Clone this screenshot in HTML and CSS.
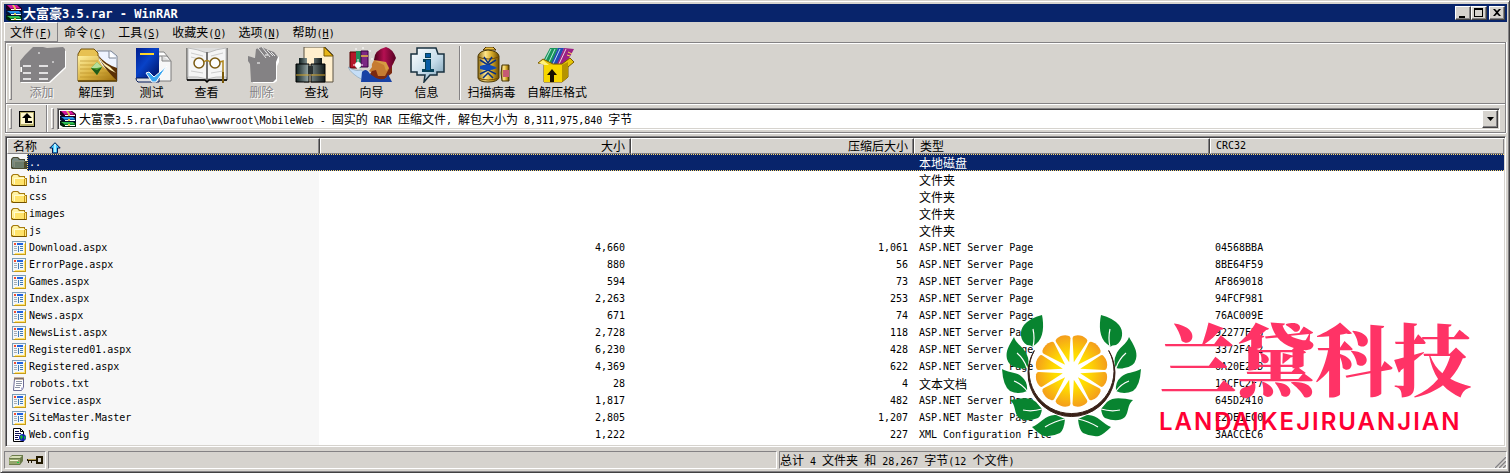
FILE: index.html
```html
<!DOCTYPE html>
<html lang="zh-CN">
<head>
<meta charset="utf-8">
<title>大富豪3.5.rar - WinRAR</title>
<link rel="stylesheet" href="styles.css">
</head>
<body>
<svg class="defs" width="0" height="0" aria-hidden="true">
  <defs>
    <linearGradient id="gold" x1="0" y1="0" x2="1" y2="0"><stop offset="0" stop-color="#8c6a10"/><stop offset=".35" stop-color="#ffe68c"/><stop offset=".65" stop-color="#d6aa29"/><stop offset="1" stop-color="#6b4a00"/></linearGradient>
    <linearGradient id="goldv" x1="0" y1="0" x2="1" y2="1"><stop offset="0" stop-color="#fff0a0"/><stop offset=".5" stop-color="#dcb544"/><stop offset="1" stop-color="#9a6a08"/></linearGradient>
    <linearGradient id="steel" x1="0" y1="0" x2="1" y2="0"><stop offset="0" stop-color="#102020"/><stop offset=".4" stop-color="#8c9c9c"/><stop offset="1" stop-color="#101818"/></linearGradient>
    <linearGradient id="blue" x1="0" y1="0" x2="1" y2="1"><stop offset="0" stop-color="#001c8c"/><stop offset=".45" stop-color="#0842c8"/><stop offset="1" stop-color="#001060"/></linearGradient>
    <linearGradient id="bubble" x1="0" y1="0" x2="1" y2="1"><stop offset="0" stop-color="#fff"/><stop offset=".55" stop-color="#c6dcea"/><stop offset="1" stop-color="#7096ac"/></linearGradient>
    <linearGradient id="fez" x1="0" y1="0" x2="1" y2="0"><stop offset="0" stop-color="#4a0018"/><stop offset=".45" stop-color="#b51052"/><stop offset="1" stop-color="#520021"/></linearGradient>
    <radialGradient id="juice" gradientUnits="userSpaceOnUse" cx="0" cy="0" r="38"><stop offset="0" stop-color="#fff000"/><stop offset=".45" stop-color="#ffdc00"/><stop offset="1" stop-color="#f3981f"/></radialGradient>

    <symbol id="books" viewBox="0 0 16 16">
      <path d="M0 0h12l4 3v3H3L0 4z" fill="#210018"/><path d="M1 0h10l3 3H4z" fill="#d6189c"/><path d="M4 3h11v1H4z" fill="#8c0863"/><path d="M5 4h10v1H5z" fill="#fff"/>
      <path d="M0 5h3l1 1h12v5H3L0 9z" fill="#001031"/><path d="M1 6h12l2 2H4z" fill="#2994e7"/><path d="M4 8h11v1H4z" fill="#0852a5"/><path d="M5 9h10v1H5z" fill="#fff"/>
      <path d="M0 10h3l1 1h12v5H3l-3-2z" fill="#00210a"/><path d="M1 11h12l2 2H4z" fill="#31bd52"/><path d="M4 13h11v1H4z" fill="#087b29"/><path d="M5 14h10v1H5z" fill="#fff"/>
      <path d="M6 0h2l2 3H8zM8 3h2v2H8zM8 8h2v2H8zM8 13h2v2H8z" fill="#dec652"/>
    </symbol>
    <symbol id="folder" viewBox="0 0 16 14">
      <path d="M0 12V3l2-2h5l2 2h5v2h2v8H1z" fill="#a57b10"/><path d="M1 11V4l1.500-2h4L8 4h5v1H3v6z" fill="#fff3a5"/><path d="M3 5h11v7H2z" fill="#ffe36b"/><path d="M3 5h10v1H4v5H3z" fill="#fffbd0"/><path d="M13 6h1v6h-1z" fill="#c69410"/><path d="M14 6h1v6h-1z" fill="#ffe77b"/><path d="M2 12h13v1H2z" fill="#735200"/>
    </symbol>
    <symbol id="folder-up" viewBox="0 0 16 14">
      <path d="M0 12V3l2-2h5l2 2h5v2h2v8H1z" fill="#4a4a31"/><path d="M1 11V4l1.500-2h4L8 4h5v1H3v6z" fill="#7b8c84"/><path d="M3 5h11v7H2z" fill="#6b7b6b"/><path d="M3 5h10v1H4v5H3z" fill="#848c7b"/><path d="M13 6h1v6h-1z" fill="#524a29"/>
    </symbol>
    <symbol id="page" viewBox="0 0 14 14">
      <path d="M0 0h14v14H0z" fill="#7b9cb5"/><path d="M14 2v12H2v-1h11V2z" fill="#c69c18"/><path d="M1 1h12v12H1z" fill="#f2f7fb"/><path d="M12 3h1v10H3v-1h9z" fill="#ffe273"/><path d="M2 2h2v2H2z" fill="#f04a31"/><path d="M5 2h6v2H5z" fill="#2163de"/><path d="M2 5h3v1H2zM2 7h3v1H2zM2 9h3v1H2z" fill="#a5adb5"/><path d="M6 5h1v6H6zM8 5h3v1H8zM8 7h3v1H8zM8 9h3v1H8z" fill="#427bb5"/>
    </symbol>
    <symbol id="note" viewBox="0 0 14 14">
      <path d="M2.500 1.500h9v9l-2 3h-8z" fill="#fff" stroke="#6b6b94"/><path d="M3 0v3M5 0v3M7 0v3M9 0v3M11 0v3" stroke="#947342"/><path d="M4 4.500h6M4 6.500h6M4 8.500h5M3 10.500h5" stroke="#8c94a5"/><path d="M9 13v-2.500h2.500z" fill="#adadd6"/>
    </symbol>
    <symbol id="config" viewBox="0 0 14 14">
      <path d="M1.500.500h7l3 3v10h-10z" fill="#fff" stroke="#000"/><path d="M8.500.500v3h3" fill="none" stroke="#000"/><path d="M3 3.500h4M3 5.500h6M3 7.500h4M3 9.500h3M3 11.500h4" stroke="#101052"/><circle cx="10.500" cy="9.500" r="3.500" fill="#1021b5"/><path d="M8 8l2-1 1 2-2 3zM12 8l2 1-2 3z" fill="#18b531"/>
    </symbol>
    <g id="leaf-side">
      <path d="M40 0C42 10 42 23 34 29Q32 30 31 32Q29 30 25 30C18 26 17 16 22 10Q28 3 40 0Z"/>
      <path d="M12 22C14 29 23 33 25 40Q28 46 25 53Q20 54 17 53Q7 52 5 44C3 36 8 29 12 22Z"/>
      <path d="M0 54C7 58 15 57 20 62Q26 67 25 76Q17 80 8 76Q1 71 0 54Z"/>
      <path d="M8 85C17 84 27 81 34 87L40 94Q39 101 36 103Q23 108 16 102C12 97 14 90 8 85Z"/>
      <path d="M30 112C38 109 44 99 54 100L63 104Q62 115 58 118Q50 122 42 121Q37 119 30 112Z"/>
      <path d="M31 32Q33 23 31 14M25 53Q22 44 15 38M25 76Q20 69 12 66M40 94Q30 97 21 95M63 104Q53 106 43 112" stroke="#fff" stroke-width="1.200" fill="none"/>
    </g>
    <path id="wedge" d="M0-9L-7.500-32Q-8-34-6-35Q0-38 6-35Q8-34 7.500-32Z" fill="url(#juice)"/>
  </defs>
</svg>

<main class="window">
  <header class="titlebar">
    <svg class="icon16"><use href="#books"/></svg>
    <h1><span class="zh">大富豪</span>3.5.rar - WinRAR</h1>
    <div class="caption">
      <button aria-label="最小化"><svg viewBox="0 0 12 10"><path d="M2 8h6v2H2z"/></svg></button>
      <button aria-label="最大化"><svg viewBox="0 0 12 10"><path d="M1 0h9v9H1zM2 2v6h7V2z" fill-rule="evenodd"/></svg></button>
      <button aria-label="关闭" class="close"><svg viewBox="0 0 12 10"><path d="M2 1h2l2 2 2-2h2L7 4.500 10 8H8L6 6 4 8H2l3-3.500z"/></svg></button>
    </div>
  </header>

  <nav class="menu">
    <button class="active"><span class="zh">文件</span>(<u>F</u>)</button>
    <button><span class="zh">命令</span>(<u>C</u>)</button>
    <button><span class="zh">工具</span>(<u>S</u>)</button>
    <button><span class="zh">收藏夹</span>(<u>O</u>)</button>
    <button><span class="zh">选项</span>(<u>N</u>)</button>
    <button><span class="zh">帮助</span>(<u>H</u>)</button>
  </nav>

  <section class="bars">
    <div class="toolbar">
      <i class="grip"></i>
      <button class="tool zh" disabled>
        <svg viewBox="0 0 48 36"><path d="M2 14l11-9 3-4h10l4 1 17 1v17L31 35H2z" fill="#fff" transform="translate(1 1)"/><path d="M2 14l5-6L15 0h10l4 1 16-1 2 2v18L31 35H2V25h2v-5H2z" fill="#848284"/><path d="M5 19h8M21 19h9M5 26h8M21 26h9M5 32h8M21 32h9" stroke="#fff" stroke-width="1.500"/><path d="M20 6h2M34 15h2" stroke="#fff"/></svg>
        添加</button>
      <button class="tool zh">
        <svg viewBox="0 0 48 36"><path d="M24 4h14l6 5v25H24z" fill="#eef4ff" stroke="#7b8494"/><path d="M36 4v7h7" fill="#fff" stroke="#7b8494"/><path d="M5 7l3-5h13l4 4v28H5z" fill="#e7c152" stroke="#73520a"/><path d="M5 9h20q1 9 12 16l7 9H5z" fill="url(#goldv)"/><path d="M25 8q3 10 19 26V21Q32 17 25 8z" fill="#5a3005"/><path d="M25 8q4 12 18 18L37 20Q28 15 25 8z" fill="#fff0b5"/><path d="M7 14h18M7 18h18M7 22h24M7 26h28M7 30h32" stroke="#b58c21" stroke-width=".6"/><path d="M5 34h39" stroke="#5a3c00" stroke-width="1.500"/><path d="M24 15l5 5-5 8-6-7z" fill="#4a9c31"/><path d="M24 15v6l-6 0zM24 21l5-1-5-5z" fill="#b5de9c"/><path d="M18 21l6 7 5-8-5 3z" fill="#215a18"/></svg>
        解压到</button>
      <button class="tool zh">
        <svg viewBox="0 0 48 36"><path d="M28 5h8l4 5v20H28z" fill="#fff" stroke="#848484"/><path d="M31 9h8l4 5v20H29z" fill="#f7f7f7" stroke="#7b7b7b"/><path d="M34 9v5h9" fill="#ddd" stroke="#848484"/><path d="M8 1h23v30H8z" fill="url(#blue)"/><path d="M8 31h23v4H10q-2-1-2-4z" fill="#dededf" stroke="#00185a"/><path d="M12 7h14" stroke="#ffd62a" stroke-width="2"/><path d="M18 26l3-1 5 5 13-11-11 16h-4z" fill="#39a5f0" stroke="#fff"/></svg>
        测试</button>
      <button class="tool zh">
        <svg viewBox="0 0 48 36"><path d="M4 1v32h19l1 2 1-2h19V1" fill="#ddd" stroke="#313131"/><path d="M5 1q9 1 19 5v26q-9-3-19-2zM43 1q-9 1-19 5v26q9-3 19-2z" fill="#f5f5f5" stroke="#bdbdbd"/><path d="M4 33h18l2 2 2-2h18" stroke="#000" stroke-width="1.500" fill="none"/><path d="M24 5v28" stroke="#737373" stroke-width="2"/><g stroke="#ccc"><path d="M8 6l12 3M8 10l12 3M8 24l12 2M28 9l12-3M28 26l12-2"/></g><circle cx="16" cy="16" r="5" fill="#ffffffaa" stroke="#7b5a10" stroke-width="1.500"/><circle cx="32" cy="16" r="5" fill="#ffffffaa" stroke="#7b5a10" stroke-width="1.500"/><path d="M21 15q3-3 6 0M37 15l3-1v20" fill="none" stroke="#ad841a" stroke-width="1.500"/><path d="M40 25v11" stroke="#7b5a0a" stroke-width="2"/></svg>
        查看</button>
      <button class="tool zh" disabled>
        <svg viewBox="0 0 48 36"><path d="M12 15h-2l1-6 6 1 1-9h8l5 4 9 4v5l-2 4v15l-3 2H14z" fill="#fff" transform="translate(1 1)"/><path d="M12 17l-2-3V9l7 2 1-9 6-2 6 3 6 2 4 5-2 5v17l-3 3H13z" fill="#848284"/><path d="M20 1l8 10M24 0l8 10M29 3l6 6M33 5l4 4" stroke="#e7e7e7"/><path d="M19 16h3M27 8h3" stroke="#fff"/></svg>
        删除</button>
      <button class="tool zh">
        <svg viewBox="0 0 48 36"><path d="M11 0h21l8 8v27H11z" fill="#ffefce" stroke="#5a5242"/><path d="M31 0v9h9z" fill="#e7b518" stroke="#7b5a00"/><path d="M6 11h8v7H6zM21 11h8v7h-8z" fill="url(#steel)"/><path d="M3 17h13v18H3zM18 17h14v18H18z" fill="url(#steel)" stroke="#000"/><path d="M3 28h13M18 28h14" stroke="#d6a529"/><path d="M15 19h5v8h-5z" fill="#293131"/></svg>
        查找</button>
      <button class="tool zh">
        <svg viewBox="0 0 48 36"><path d="M2 5h7v16H2z" fill="#b51829" stroke="#520000"/><path d="M8 4h5v17H8z" fill="#218c5a"/><path d="M13 4h7v16h-7z" fill="#7b2984" stroke="#390042"/><path d="M13 9h7" stroke="#e7bd42" stroke-width="1.500"/><path d="M27 12q-4 5-3 8l-3 4 4 2-1 4 11 3 9-14z" fill="#c67b31"/><path d="M24 24l4-1 2 6 7 0 7-13v10l-8 7H26l-4-6z" fill="#7b2910"/><path d="M27 14l9 4 2 6 8-8-3-9z" fill="#d69a42"/><path d="M26 13q0-10 12-13 7 2 10 11l-6 12-4-8z" fill="url(#fez)"/><path d="M0 20q8 5 13 3l6 4-4 6Q3 27 0 20z" fill="#c6def7" stroke="#7394ad" stroke-width=".5"/><path d="M14 25q4-5 8 2l6 4q10 4 12-4l4 8H13z" fill="#1842a5"/><circle cx="10" cy="18" r="3" fill="#fff"/><path d="M10 12v10M5 18h10M8 1v2M15 0v2M22 3v2M24 11v2" stroke="#fff"/></svg>
        向导</button>
      <button class="tool zh">
        <svg viewBox="0 0 48 36"><path d="M14 1h19l2 6h6v18h-7v3h-7l-6 7 1-7h-8v-3H8V7h6z" fill="url(#bubble)" stroke="#18313f" stroke-width="1.500"/><path d="M22 6h6v5h-6zM20 12h8v10h3v3H19v-3h3v-7h-2z" fill="#08425a"/><path d="M23 7h4v3h-4zM23 13h4v10h-4z" fill="#085ca5"/></svg>
        信息</button>
      <i class="divider"></i>
      <button class="tool zh">
        <svg viewBox="0 0 48 36"><path d="M15 3l3-3h7l3 3z" fill="#e7bd42" stroke="#4a3100"/><path d="M10 9q1-5 10-6 10 1 11 6v22q-2 4-11 4t-10-4z" fill="url(#gold)" stroke="#4a3908"/><path d="M10 10q10 4 21 0M10 31q10 4 21 0" fill="none" stroke="#734a00"/><path d="M12 13l8 5 8-5M12 27l8-4 8 4M16 10l4 6 4-6M15 31l5-5 5 5" fill="none" stroke="#083184" stroke-width="1.500"/><path d="M12 19q8-4 17 2-8 4-17 1z" fill="#104ab5"/><path d="M34 18h7v16h-7q-2-8 0-16z" fill="url(#gold)" stroke="#4a3908"/><path d="M35 23h6v7h-6z" fill="#c65a73"/></svg>
        扫描病毒</button>
      <button class="tool wide zh">
        <svg viewBox="0 0 48 36"><path d="M10 14l7-13h8l-6 16z" fill="#18945a"/><path d="M12 14l6-12M16 15l6-13" stroke="#dff" stroke-width=".8"/><path d="M18 17l7-16h6l-6 16z" fill="#214ab5"/><path d="M20 17l7-15" stroke="#dff" stroke-width=".8"/><path d="M24 17l7-16 10 1-8 15z" fill="#9c2184"/><path d="M26 17l7-15" stroke="#fff" stroke-width=".8"/><path d="M35 5l4 2M34 8l3 1" stroke="#f7d65a"/><path d="M11 17l-6-1 5-4 10 5h9l8-6 4 4-6 5v10l-6 5H11z" fill="#e7c608" stroke="#7b5a00"/><path d="M11 18h18v17H11z" fill="#f7d600"/><path d="M29 18l6-3v15l-6 5z" fill="#b59400"/><path d="M6 16l4-3 6 5h-5z" fill="#fff07b"/><path d="M19 22l5 6h-3v7h-4v-7h-3z" fill="#181000"/></svg>
        自解压格式</button>
    </div>
    <div class="address">
      <i class="grip"></i>
      <button class="up" aria-label="上一级"><svg viewBox="0 0 16 16"><path d="M0 0h16v16H0z"/><path d="M1 1h14v14H1z" fill="#b5ad6b"/><path d="M2 2h12v11H2z" fill="#fff7ce"/><path d="M8 2l5 5H9v3h4v2H6V7H3z" fill="#000"/></svg></button>
      <i class="edge"></i>
      <i class="grip"></i>
      <div class="combo">
        <svg class="icon16"><use href="#books"/></svg>
        <label for="path"><span class="zh">大富豪</span>3.5.rar\Dafuhao\wwwroot\MobileWeb - <span class="zh">固实的</span> RAR <span class="zh">压缩文件</span>, <span class="zh">解包大小为</span> 8,311,975,840 <span class="zh">字节</span></label>
        <span class="drop"><select id="path"><option>\</option></select><svg viewBox="0 0 7 4"><path d="M0 0h7L3.500 4z"/></svg></span>
      </div>
    </div>
  </section>

  <section class="list">
    <table>
      <colgroup><col class="c-name"><col class="c-size"><col class="c-packed"><col class="c-type"><col></colgroup>
      <thead><tr class="zh"><th>名称<svg class="sort" viewBox="0 0 12 12"><path d="M6 .7L11.200 6H8.500v5h-5V6H.8z" fill="#42c6ff" stroke="#001852"/><path d="M6 2v8" stroke="#b5f0ff" stroke-width="2"/></svg></th><th class="num">大小</th><th class="num">压缩后大小</th><th>类型</th><th class="latin">CRC32</th></tr></thead>
      <tbody>
        <tr class="selected"><td><svg class="ficon"><use href="#folder-up"/></svg>..</td><td></td><td></td><td class="zh">本地磁盘</td><td></td></tr>
        <tr><td><svg class="ficon"><use href="#folder"/></svg>bin</td><td></td><td></td><td class="zh">文件夹</td><td></td></tr>
        <tr><td><svg class="ficon"><use href="#folder"/></svg>css</td><td></td><td></td><td class="zh">文件夹</td><td></td></tr>
        <tr><td><svg class="ficon"><use href="#folder"/></svg>images</td><td></td><td></td><td class="zh">文件夹</td><td></td></tr>
        <tr><td><svg class="ficon"><use href="#folder"/></svg>js</td><td></td><td></td><td class="zh">文件夹</td><td></td></tr>
        <tr><td><svg class="ficon"><use href="#page"/></svg>Download.aspx</td><td>4,660</td><td>1,061</td><td>ASP.NET Server Page</td><td>04568BBA</td></tr>
        <tr><td><svg class="ficon"><use href="#page"/></svg>ErrorPage.aspx</td><td>880</td><td>56</td><td>ASP.NET Server Page</td><td>8BE64F59</td></tr>
        <tr><td><svg class="ficon"><use href="#page"/></svg>Games.aspx</td><td>594</td><td>73</td><td>ASP.NET Server Page</td><td>AF869018</td></tr>
        <tr><td><svg class="ficon"><use href="#page"/></svg>Index.aspx</td><td>2,263</td><td>253</td><td>ASP.NET Server Page</td><td>94FCF981</td></tr>
        <tr><td><svg class="ficon"><use href="#page"/></svg>News.aspx</td><td>671</td><td>74</td><td>ASP.NET Server Page</td><td>76AC009E</td></tr>
        <tr><td><svg class="ficon"><use href="#page"/></svg>NewsList.aspx</td><td>2,728</td><td>118</td><td>ASP.NET Server Page</td><td>92277EB8</td></tr>
        <tr><td><svg class="ficon"><use href="#page"/></svg>Registered01.aspx</td><td>6,230</td><td>428</td><td>ASP.NET Server Page</td><td>3372F4E2</td></tr>
        <tr><td><svg class="ficon"><use href="#page"/></svg>Registered.aspx</td><td>4,369</td><td>622</td><td>ASP.NET Server Page</td><td>6A20E28D</td></tr>
        <tr><td><svg class="ficon"><use href="#note"/></svg>robots.txt</td><td>28</td><td>4</td><td class="zh">文本文档</td><td>12CFC2F7</td></tr>
        <tr><td><svg class="ficon"><use href="#page"/></svg>Service.aspx</td><td>1,817</td><td>482</td><td>ASP.NET Server Page</td><td>645D2410</td></tr>
        <tr><td><svg class="ficon"><use href="#page"/></svg>SiteMaster.Master</td><td>2,805</td><td>1,207</td><td>ASP.NET Master Page</td><td>E2DE1EC0</td></tr>
        <tr><td><svg class="ficon"><use href="#config"/></svg>Web.config</td><td>1,222</td><td>227</td><td>XML Configuration File</td><td>3AACCEC6</td></tr>
      </tbody>
    </table>
    <div class="brand">
      <svg class="emblem" viewBox="0 0 139 122">
        <g fill="#088430"><use href="#leaf-side"/><use href="#leaf-side" transform="matrix(-1 0 0 1 139 0)"/></g>
        <path d="M32.300 35.500A43.500 43.500 0 1 0 106.700 35.500A42.500 42.500 0 1 1 32.300 35.500Z" fill="#392118" stroke="#392118"/>
        <circle cx="69.500" cy="56" r="37" fill="#fff"/>
        <g transform="translate(69.500 56)"><use href="#wedge" transform="rotate(15)"/><use href="#wedge" transform="rotate(45)"/><use href="#wedge" transform="rotate(75)"/><use href="#wedge" transform="rotate(105)"/><use href="#wedge" transform="rotate(135)"/><use href="#wedge" transform="rotate(165)"/><use href="#wedge" transform="rotate(195)"/><use href="#wedge" transform="rotate(225)"/><use href="#wedge" transform="rotate(255)"/><use href="#wedge" transform="rotate(285)"/><use href="#wedge" transform="rotate(315)"/><use href="#wedge" transform="rotate(345)"/></g>
      </svg>
      <div class="brand-text"><strong>兰黛科技</strong><span>LANDAIKEJIRUANJIAN</span></div>
    </div>
  </section>

  <footer class="status">
    <div class="pane icons">
      <svg class="disk" viewBox="0 0 16 10"><path d="M1 3l3-3h11v6l-3 4H1z" fill="#6b7b4a"/><path d="M1 3l3-2h10l-2 2z" fill="#d6deb5"/><path d="M1 4h11v5H1z" fill="#94a56b"/><path d="M2 5h8v1H2z" fill="#f0f5d6"/><path d="M9 7h2v1H9z" fill="#18d642"/></svg>
      <svg class="key" viewBox="0 0 16 8"><path d="M0 3h9V0h7v8H9V5H5v2H4V5H2v2H1V5H0z" fill="#211800"/><path d="M11 2h3v4h-3z" fill="#d6d3ce"/><path d="M1 3h8v1H1z" fill="#b59c4a"/></svg>
    </div>
    <div class="pane"></div>
    <div class="pane total"><span class="zh">总计</span> 4 <span class="zh">文件夹</span> <span class="zh">和</span> 28,267 <span class="zh">字节</span>(12 <span class="zh">个文件</span>)<svg class="resize" viewBox="0 0 12 12"><path d="M0 12L12 0M4 12l8-8M8 12l4-4" stroke="#fff"/><path d="M1 12L12 1M5 12l7-7M9 12l3-3" stroke="#848284" stroke-width="1.500"/></svg></div>
  </footer>
</main>
</body>
</html>
```

FILE: styles.css
```css
:root {
  --face: #d6d3ce;
  --shadow: #848284;
  --dark: #424142;
  --navy: #08246b;
  --focus: #ffdb6b;
}

* { box-sizing: border-box; }

body {
  margin: 0;
  background: var(--face);
  color: #000;
  font: 10px/17px "DejaVu Sans Mono", "Noto Sans CJK SC", monospace;
}

button, select { font: inherit; color: inherit; margin: 0; padding: 0; border: 0; background: none; }
.defs { position: absolute; }
svg { flex: none; }
.zh { font-family: "Noto Sans CJK SC", sans-serif; font-size: 12px; }
.icon16 { width: 16px; height: 16px; }

.window {
  display: flex;
  flex-direction: column;
  min-height: 100vh;
  padding: 2px 2px 2px 3px;
  border: 1px solid;
  border-color: var(--face) var(--dark) var(--dark) var(--face);
  box-shadow: inset 1px 1px #fff, inset -1px -1px var(--shadow);
}

/* Title bar */
.titlebar {
  display: flex;
  align-items: center;
  height: 18px;
  margin-top: 1px;
  padding: 0 2px;
  background: var(--navy);
  color: #fff;
}
.titlebar h1 { flex: 1; margin: 0 0 0 1px; font-size: 12px; line-height: 18px; white-space: pre; }
.titlebar .zh { font-size: 13px; }
.caption { display: flex; }
.caption button {
  display: flex;
  width: 16px;
  height: 14px;
  padding: 1px;
  background: var(--face);
  border: 1px solid;
  border-color: #fff var(--dark) var(--dark) #fff;
  box-shadow: inset -1px -1px var(--shadow);
}
.caption svg { width: 12px; height: 10px; }
.caption .close { margin-left: 2px; }

/* Menu */
.menu { display: flex; height: 20px; }
.menu button { padding: 0 5px; border: 1px solid transparent; line-height: 17px; white-space: nowrap; }
.menu .active { border-color: #fff var(--shadow) var(--shadow) #fff; }

/* Tool bars */
.bars {
  margin: 0 1px;
  border: 1px solid var(--shadow);
  box-shadow: inset 1px 1px #fff, 0 1px #fff, 1px 0 #fff;
}
.grip {
  flex: none;
  width: 3px;
  border: 1px solid;
  border-color: #fff var(--shadow) var(--shadow) #fff;
}
.toolbar { display: flex; height: 61px; padding: 3px; border-bottom: 1px solid var(--shadow); }
.toolbar .grip { margin-right: 2px; }
.tool {
  display: flex;
  flex-direction: column;
  align-items: center;
  width: 55px;
  padding-top: 1px;
  line-height: 17px;
  white-space: nowrap;
}
.tool svg { width: 48px; height: 36px; }
.tool:disabled { color: var(--shadow); text-shadow: 1px 1px #fff; }
.wide { width: 76px; }
.divider { width: 2px; margin: 0 3px 0 5px; border-left: 1px solid var(--shadow); border-right: 1px solid #fff; }

.address { display: flex; height: 28px; padding: 3px; border-top: 1px solid #fff; }
.up { width: 16px; height: 16px; margin: 3px 11px 0 7px; }
.up svg { display: block; width: 16px; height: 16px; }
.edge { width: 2px; margin: -3px 3px -3px 0; border-left: 1px solid var(--shadow); border-right: 1px solid #fff; }
.combo {
  flex: 1;
  display: flex;
  align-items: center;
  height: 22px;
  margin: 0 2px 0 3px;
  padding-left: 2px;
  background: #fff;
  border: 1px solid;
  border-color: var(--shadow) #fff #fff var(--shadow);
  box-shadow: inset 1px 1px var(--dark), inset -1px -1px var(--face);
}
.combo label { flex: 1; margin-left: 3px; white-space: nowrap; overflow: hidden; }
.drop {
  display: grid;
  place-items: center;
  width: 16px;
  height: 18px;
  margin-right: 1px;
  background: var(--face);
  border: 1px solid;
  border-color: #fff var(--dark) var(--dark) #fff;
  box-shadow: inset -1px -1px var(--shadow);
}
.drop > * { grid-area: 1 / 1; }
.drop select { appearance: none; width: 14px; height: 16px; color: transparent; }
.drop svg { width: 7px; height: 4px; pointer-events: none; }

/* File list */
.list {
  position: relative;
  flex: 1;
  margin: 3px 1px 4px;
  background: linear-gradient(to right, #f7f7f7 313px, #fff 313px);
  border: 1px solid;
  border-color: var(--shadow) #fff #fff var(--shadow);
  box-shadow: inset 1px 1px var(--dark), inset -1px -1px var(--face);
  padding: 1px;
}
table { width: 100%; table-layout: fixed; border-spacing: 0; }
.c-name { width: 313px; }
.c-size { width: 311px; }
.c-packed { width: 283px; }
.c-type { width: 296px; }
th {
  height: 16px;
  padding: 0 5px;
  background: var(--face);
  border: 1px solid;
  border-color: #fff var(--dark) var(--shadow) #fff;
  box-shadow: inset -1px 0 var(--shadow);
  font-weight: 400;
  line-height: 14px;
  text-align: left;
}
th:last-child { border-right: 0; }
.num { text-align: right; }
th.latin { font-family: "DejaVu Sans Mono", monospace; font-size: 10px; }
.sort { width: 12px; height: 12px; margin: -2px 0 -2px 12px; vertical-align: middle; }
td { height: 17px; padding: 0 6px 0 5px; line-height: 17px; white-space: nowrap; }
td:first-child { padding-left: 4px; }
td:nth-child(2), td:nth-child(3) { text-align: right; }
.ficon { width: 16px; height: 14px; margin: -2px 2px -2px 0; vertical-align: middle; }
.selected {
  color: #fff;
  background:
    repeating-linear-gradient(to right, var(--focus) 0 1px, var(--navy) 1px 2px) top / 100% 1px no-repeat,
    repeating-linear-gradient(to right, var(--focus) 0 1px, var(--navy) 1px 2px) bottom / 100% 1px no-repeat,
    var(--navy);
}
.selected td:first-child {
  background:
    linear-gradient(#f7f7f7, #f7f7f7) left / 20px 100% no-repeat,
    repeating-linear-gradient(var(--focus) 0 1px, var(--navy) 1px 2px) 20px 0 / 1px 100% no-repeat;
}

/* Brand mark laid over the list */
.brand {
  position: absolute;
  right: 34px;
  bottom: 4px;
  display: flex;
  gap: 18px;
  pointer-events: none;
}
.emblem { width: 139px; height: 122px; }
.brand-text { display: flex; flex-direction: column; gap: 5px; color: #ff3366; font-family: "Noto Serif CJK SC", "Noto Sans CJK SC", sans-serif; }
.brand-text strong { font-size: 78px; font-weight: 900; line-height: 82px; }
.brand-text span { color: #ff0033; font-family: Inter, sans-serif; font-size: 24px; font-weight: 600; line-height: 40px; letter-spacing: 2px; }

/* Status bar */
.status { display: flex; gap: 2px; height: 18px; margin-bottom: 1px; }
.pane {
  flex: none;
  width: 729px;
  border: 1px solid;
  border-color: var(--shadow) #fff #fff var(--shadow);
  white-space: nowrap;
}
.icons { display: flex; align-items: center; gap: 3px; width: 42px; padding-left: 3px; }
.disk { width: 16px; height: 10px; }
.key { width: 16px; height: 8px; }
.total { position: relative; flex: 1; line-height: 16px; }
.resize { position: absolute; right: 0; bottom: 0; width: 12px; height: 12px; }
```
